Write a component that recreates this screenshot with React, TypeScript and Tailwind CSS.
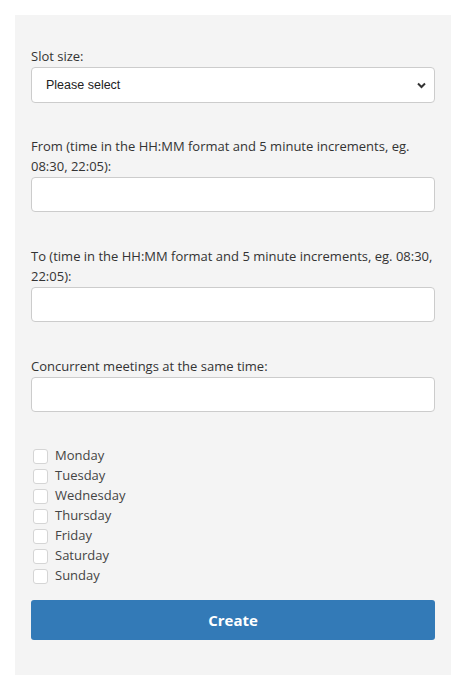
const days = ['Monday', 'Tuesday', 'Wednesday', 'Thursday', 'Friday', 'Saturday', 'Sunday']

const Field = ({ label }: { label: string }) => (
  <div className="mb-[34px] flex flex-col gap-px">
    <label className="text-[13px] leading-5 text-[#333]">{label}</label>
    <input
      type="text"
      className="h-[35px] w-full rounded-[4px] border border-[#ccc] bg-white px-3 outline-none"
    />
  </div>
)

const App = () => {
  return (
    <div className="w-full bg-white p-[15px] font-['Open_Sans',sans-serif]">
      <div className="w-[436px] bg-[#f4f4f4] px-4 pt-[31px] pb-[35px]">
        {/* Slot size */}
        <div className="mb-[33px] flex flex-col gap-px">
          <label className="text-[13px] leading-5 text-[#333]">Slot size:</label>
          <div className="relative">
            <select className="h-[36px] w-full appearance-none rounded-[4px] border border-[#ccc] bg-white pl-[14px] font-['Liberation_Sans',Arial,sans-serif] text-[12.5px] text-[#222] outline-none">
              <option>Please select</option>
            </select>
            <svg
              className="pointer-events-none absolute right-[9px] top-[15px]"
              width="9"
              height="7"
              viewBox="0 0 9 7"
            >
              <path d="M1 1.5 L4.5 5 L8 1.5" fill="none" stroke="#333" strokeWidth="2" />
            </svg>
          </div>
        </div>

        <Field label="From (time in the HH:MM format and 5 minute increments, eg. 08:30, 22:05):" />
        <Field label="To (time in the HH:MM format and 5 minute increments, eg. 08:30, 22:05):" />
        <Field label="Concurrent meetings at the same time:" />

        {/* Days */}
        <div className="mb-[14px] flex flex-col">
          {days.map((d) => (
            <label key={d} className="flex h-5 items-center gap-[7px] pl-[2px] text-[13px] text-[#444]">
              <span className="inline-block h-[15px] w-[15px] rounded-[3px] border border-[#d5d5d5] bg-white" />
              {d}
            </label>
          ))}
        </div>

        <button className="flex h-10 w-full items-center justify-center rounded-[3px] bg-[#337ab7] text-[15px] font-bold text-white">
          Create
        </button>
      </div>
    </div>
  )
}

export default App
